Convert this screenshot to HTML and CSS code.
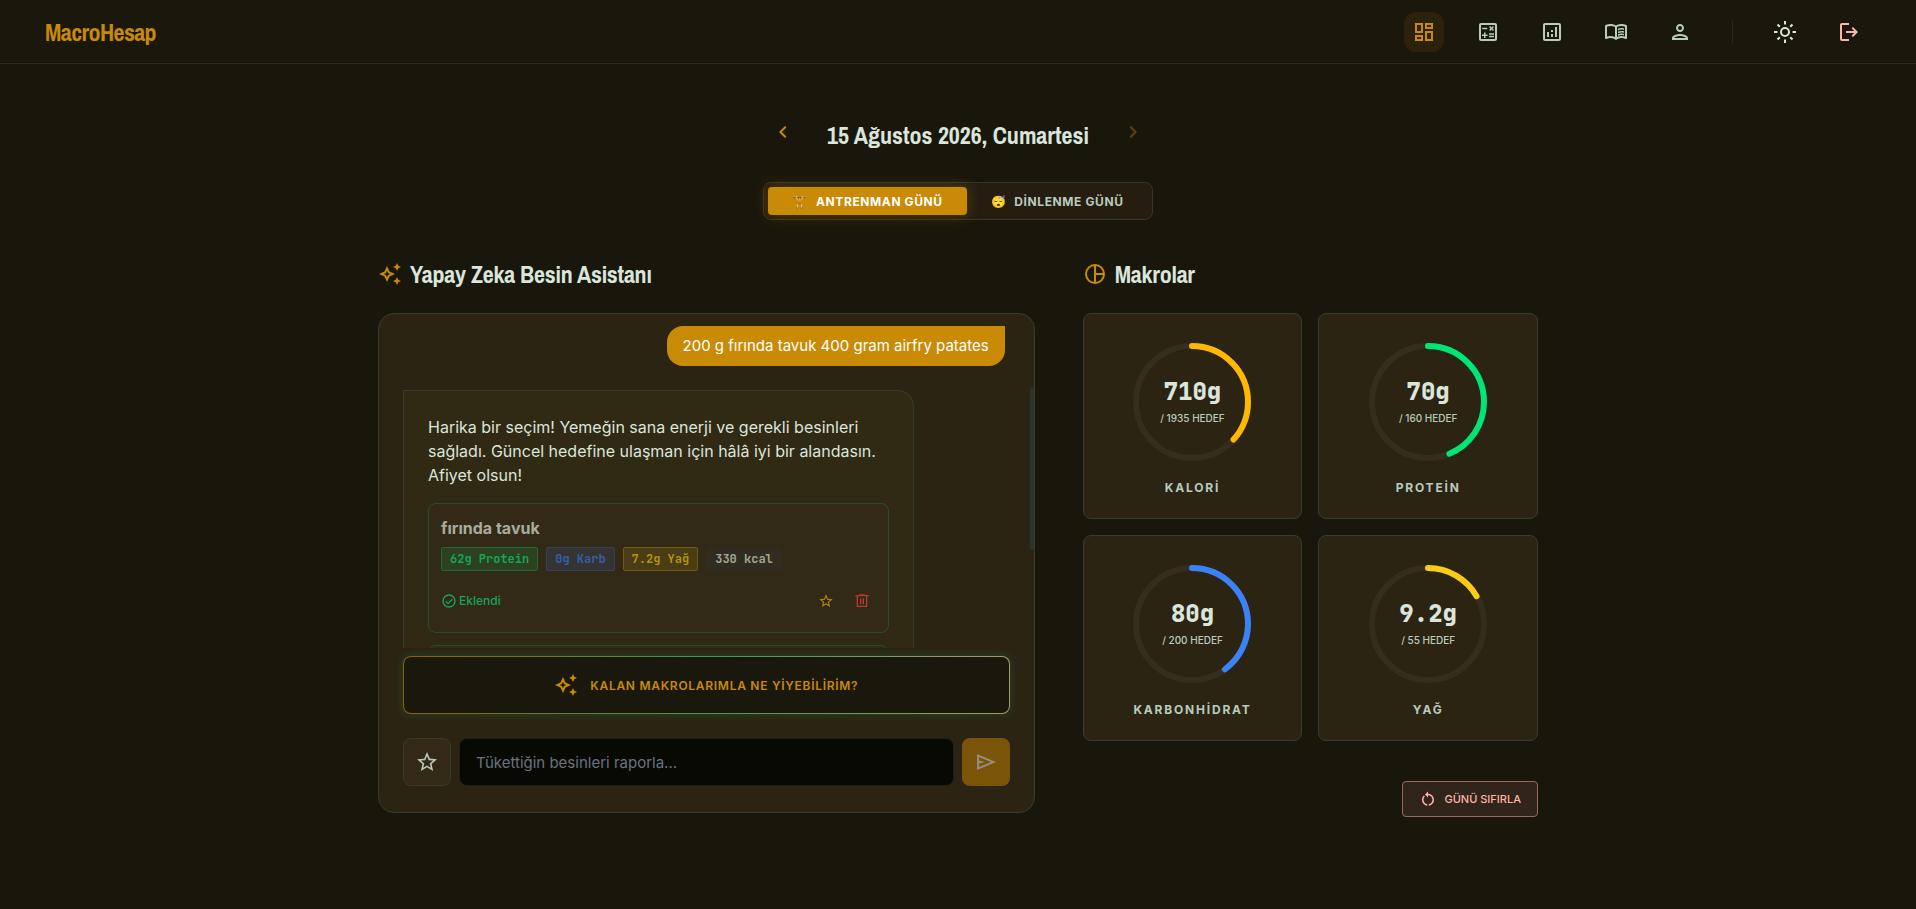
FILE: index.html
```html
<!DOCTYPE html>
<html lang="tr">
<head>
    <meta charset="UTF-8">
    <meta name="viewport" content="width=device-width, initial-scale=1.0">
    <title>MacroHesap</title>
    <link rel="stylesheet" href="styles.css">
</head>
<body>

    <!-- Header -->
    <header class="header">
        <a href="#" class="logo">MacroHesap</a>
        <nav class="nav">
            <a href="#" class="nav-link active" aria-label="Panel">
                <svg class="icon" viewBox="0 0 24 24"><path d="M19 5v2h-4V5h4M9 5v6H5V5h4m10 8v6h-4v-6h4M9 17v2H5v-2h4M21 3h-8v6h8V3zM11 3H3v10h8V3zm10 8h-8v10h8V11zm-10 4H3v6h8v-6z"/></svg>
            </a>
            <a href="#" class="nav-link" aria-label="Hesapla">
                <svg class="icon" viewBox="0 0 24 24"><path d="M19 3H5c-1.1 0-2 .9-2 2v14c0 1.1.9 2 2 2h14c1.1 0 2-.9 2-2V5c0-1.1-.9-2-2-2zm0 16H5V5h14v14z"/><path d="M6.25 7.72h5v1.5h-5zM13 15.75h5v1.5h-5zM13 13.25h5v1.5h-5zM8 18h1.5v-2h2v-1.5h-2v-2H8v2H6V16h2zM14.09 10.95l1.41-1.41 1.41 1.41 1.06-1.06-1.41-1.42 1.41-1.41L16.91 6 15.5 7.41 14.09 6l-1.06 1.06 1.41 1.41-1.41 1.42z"/></svg>
            </a>
            <a href="#" class="nav-link" aria-label="Analiz">
                <svg class="icon" viewBox="0 0 24 24"><path d="M19 3H5c-1.1 0-2 .9-2 2v14c0 1.1.9 2 2 2h14c1.1 0 2-.9 2-2V5c0-1.1-.9-2-2-2zm0 16H5V5h14v14z"/><path d="M7 12h2v5H7zM15 7h2v10h-2zM11 14h2v3h-2zM11 10h2v2h-2z"/></svg>
            </a>
            <a href="#" class="nav-link" aria-label="Tarifler">
                <svg class="icon" viewBox="0 0 24 24"><path fill-rule="evenodd" d="M12 20c-1.600-1.250-3.500-2-5.500-2-1.400 0-2.750.35-4 .95C1.800 19.300 1 18.800 1 18.050V6c0-.4.2-.7.55-.9C3.100 4.400 4.800 4 6.500 4c1.950 0 3.800.5 5.500 1.500C13.700 4.500 15.550 4 17.500 4c1.700 0 3.400.4 4.950 1.100.35.2.55.5.55.9v12.050c0 .75-.8 1.250-1.500.9-1.250-.6-2.600-.95-4-.95-2 0-3.900.75-5.500 2zM11 17.100V7.100C9.650 6.400 8.150 6 6.500 6 5.300 6 4.150 6.200 3 6.650v9.900C4.100 16.200 5.300 16 6.500 16c1.600 0 3.100.35 4.500 1.100zm2 0c1.400-.75 2.900-1.100 4.500-1.100 1.200 0 2.400.2 3.500.55v-9.900C19.850 6.200 18.700 6 17.500 6c-1.650 0-3.150.4-4.500 1.100z"/><path d="M14 8.800c1.800-.8 4-.95 6-.3v1.500c-2-.6-4.200-.5-6 .4zM14 11.600c1.800-.8 4-.95 6-.3v1.500c-2-.6-4.200-.5-6 .4zM14 14.300c1.800-.8 4-.95 6-.3v1.500c-2-.6-4.200-.5-6 .4z"/></svg>
            </a>
            <a href="#" class="nav-link" aria-label="Profil">
                <svg class="icon" viewBox="0 0 24 24"><path d="M12 6a2 2 0 1 1 0 4 2 2 0 0 1 0-4m0 10c2.700 0 5.800 1.290 6 2H6c.23-.72 3.310-2 6-2m0-12C9.790 4 8 5.790 8 8s1.790 4 4 4 4-1.790 4-4-1.790-4-4-4zm0 10c-2.670 0-8 1.340-8 4v2h16v-2c0-2.660-5.330-4-8-4z"/></svg>
            </a>
            <span class="divider"></span>
            <button class="nav-link theme" aria-label="Tema">
                <svg class="icon" viewBox="0 0 24 24"><g fill="none" stroke="currentColor" stroke-width="2"><circle cx="12" cy="12" r="4"/><path d="M12 1v3.500M12 19.500V23M1 12h3.500M19.500 12H23M4.500 4.500l2.300 2.300M17.200 17.200l2.300 2.300M4.500 19.500l2.300-2.300M17.200 6.800l2.300-2.300"/></g></svg>
            </button>
            <button class="nav-link logout" aria-label="Çıkış">
                <svg class="icon" viewBox="0 0 24 24"><path d="M5 5h7V3H5c-1.100 0-2 .9-2 2v14c0 1.100.9 2 2 2h7v-2H5V5z"/><path d="M16 17l-1.400-1.450L17.150 13H9v-2h8.150L14.600 8.450 16 7l5 5z"/></svg>
            </button>
        </nav>
    </header>

    <main class="main">

        <!-- Date picker -->
        <div class="date-row">
            <button class="date-btn" aria-label="Önceki gün">
                <svg class="icon" viewBox="0 0 24 24"><path d="M15.410 7.410 14 6l-6 6 6 6 1.410-1.410L10.830 12z"/></svg>
            </button>
            <h1>15 Ağustos 2026, Cumartesi</h1>
            <button class="date-btn" aria-label="Sonraki gün" disabled>
                <svg class="icon" viewBox="0 0 24 24"><path d="M8.590 16.590 10 18l6-6-6-6-1.410 1.410L13.170 12z"/></svg>
            </button>
        </div>

        <!-- Day type -->
        <div class="day-type">
            <button class="day-btn active"><span class="emoji">🏋️</span>ANTRENMAN GÜNÜ</button>
            <button class="day-btn"><span class="emoji">😴</span>DİNLENME GÜNÜ</button>
        </div>

        <div class="grid">

            <!-- Assistant -->
            <section class="col-chat">
                <h2>
                    <svg class="icon" viewBox="0 0 24 24"><path d="M19 9l1.250-2.750L23 5l-2.750-1.250L19 1l-1.250 2.750L15 5l2.750 1.250L19 9zm0 6l-1.250 2.750L15 19l2.750 1.250L19 23l1.250-2.750L23 19l-2.750-1.250L19 15zm-7.500-5.500L9 4 6.500 9.500 1 12l5.500 2.500L9 20l2.500-5.500L17 12l-5.500-2.500zm-1.510 3.490L9 15.170l-.99-2.180L5.830 12l2.180-.99L9 8.830l.99 2.180 2.180.99-2.180.99z"/></svg>
                    Yapay Zeka Besin Asistanı
                </h2>
                <div class="chat">
                    <div class="messages">
                        <p class="msg-user">200 g fırında tavuk 400 gram airfry patates</p>
                        <div class="msg-ai">
                            <p>Harika bir seçim! Yemeğin sana enerji ve gerekli besinleri sağladı. Güncel hedefine ulaşman için hâlâ iyi bir alandasın. Afiyet olsun!</p>
                            <div class="foods">
                                <div class="food">
                                    <h3>fırında tavuk</h3>
                                    <div class="chips">
                                        <span class="chip protein">62g Protein</span>
                                        <span class="chip carb">0g Karb</span>
                                        <span class="chip fat">7.2g Yağ</span>
                                        <span class="chip kcal">330 kcal</span>
                                    </div>
                                    <div class="food-footer">
                                        <span class="added">
                                            <svg class="icon-sm" viewBox="0 0 24 24"><g fill="none" stroke="currentColor" stroke-width="2"><circle cx="12" cy="12" r="9"/><path d="M7 12.500l3.500 3.500 6.500-6.500"/></g></svg>
                                            Eklendi
                                        </span>
                                        <div class="food-actions">
                                            <button class="fav" aria-label="Favorilere ekle">
                                                <svg class="icon-sm" viewBox="0 0 24 24"><path d="M22 9.240l-7.190-.62L12 2 9.190 8.630 2 9.240l5.460 4.730L5.820 21 12 17.270 18.180 21l-1.630-7.030L22 9.240zM12 15.400l-3.760 2.270 1-4.280-3.320-2.880 4.380-.38L12 6.100l1.710 4.040 4.380.38-3.320 2.880 1 4.280L12 15.400z"/></svg>
                                            </button>
                                            <button class="delete" aria-label="Sil">
                                                <svg class="icon-sm" viewBox="0 0 24 24"><path fill-rule="evenodd" d="M4 21V5H2V3h6V2h8v1h6v2h-2v16zM6 5v14h12V5z"/><path d="M9 8h2v9H9zM13 8h2v9h-2z"/></svg>
                                            </button>
                                        </div>
                                    </div>
                                </div>
                                <div class="food"></div>
                            </div>
                        </div>
                        <span class="scroll-thumb"></span>
                    </div>

                    <button class="suggest">
                        <svg class="icon" viewBox="0 0 24 24"><path d="M19 9l1.250-2.750L23 5l-2.750-1.250L19 1l-1.250 2.750L15 5l2.750 1.250L19 9zm0 6l-1.250 2.750L15 19l2.750 1.250L19 23l1.250-2.750L23 19l-2.750-1.250L19 15zm-7.500-5.500L9 4 6.500 9.500 1 12l5.500 2.500L9 20l2.500-5.500L17 12l-5.500-2.500zm-1.510 3.490L9 15.170l-.99-2.180L5.830 12l2.180-.99L9 8.830l.99 2.180 2.180.99-2.180.99z"/></svg>
                        KALAN MAKROLARIMLA NE YİYEBİLİRİM?
                    </button>

                    <form class="composer">
                        <button type="button" class="square" aria-label="Favoriler">
                            <svg class="icon" viewBox="0 0 24 24"><path d="M22 9.240l-7.190-.62L12 2 9.190 8.630 2 9.240l5.460 4.730L5.820 21 12 17.270 18.180 21l-1.630-7.030L22 9.240zM12 15.400l-3.760 2.270 1-4.280-3.320-2.880 4.380-.38L12 6.100l1.710 4.040 4.380.38-3.320 2.880 1 4.280L12 15.400z"/></svg>
                        </button>
                        <input type="text" placeholder="Tükettiğin besinleri raporla..." aria-label="Besin raporu">
                        <button type="submit" class="square send" aria-label="Gönder" disabled>
                            <svg class="icon" viewBox="0 0 24 24"><path fill-rule="evenodd" d="M3 20V4l19 8zm2-3 11.850-5L5 7v3.500l6 1.500-6 1.500z"/></svg>
                        </button>
                    </form>
                </div>
            </section>

            <!-- Macros -->
            <section class="col-macros">
                <h2>
                    <svg class="icon" viewBox="0 0 24 24"><g fill="none" stroke="currentColor" stroke-width="2"><circle cx="12" cy="12" r="9"/><path d="M12 3v18M12 12h9"/></g></svg>
                    Makrolar
                </h2>
                <div class="macros">
                    <div class="macro">
                        <div class="ring">
                            <svg viewBox="0 0 128 128"><circle class="track" cx="64" cy="64" r="56"/><circle class="bar calories" cx="64" cy="64" r="56" pathLength="100" stroke-dasharray="36.700 100"/></svg>
                            <div class="ring-text"><strong>710g</strong><span>/ 1935 HEDEF</span></div>
                        </div>
                        <span class="macro-label">KALORİ</span>
                    </div>
                    <div class="macro">
                        <div class="ring">
                            <svg viewBox="0 0 128 128"><circle class="track" cx="64" cy="64" r="56"/><circle class="bar green" cx="64" cy="64" r="56" pathLength="100" stroke-dasharray="43.750 100"/></svg>
                            <div class="ring-text"><strong>70g</strong><span>/ 160 HEDEF</span></div>
                        </div>
                        <span class="macro-label">PROTEİN</span>
                    </div>
                    <div class="macro">
                        <div class="ring">
                            <svg viewBox="0 0 128 128"><circle class="track" cx="64" cy="64" r="56"/><circle class="bar blue" cx="64" cy="64" r="56" pathLength="100" stroke-dasharray="40 100"/></svg>
                            <div class="ring-text"><strong>80g</strong><span>/ 200 HEDEF</span></div>
                        </div>
                        <span class="macro-label">KARBONHİDRAT</span>
                    </div>
                    <div class="macro">
                        <div class="ring">
                            <svg viewBox="0 0 128 128"><circle class="track" cx="64" cy="64" r="56"/><circle class="bar yellow" cx="64" cy="64" r="56" pathLength="100" stroke-dasharray="16.700 100"/></svg>
                            <div class="ring-text"><strong>9.2g</strong><span>/ 55 HEDEF</span></div>
                        </div>
                        <span class="macro-label">YAĞ</span>
                    </div>
                </div>
                <button class="reset">
                    <svg viewBox="0 0 24 24"><path d="M12 5V2L8 6l4 4V7c3.310 0 6 2.690 6 6 0 2.970-2.170 5.430-5 5.910v2.020c3.950-.49 7-3.850 7-7.930 0-4.420-3.580-8-8-8zm-6 8c0-1.650.67-3.150 1.760-4.240L6.340 7.340C4.900 8.790 4 10.790 4 13c0 4.080 3.050 7.440 7 7.930v-2.020c-2.830-.48-5-2.940-5-5.910z"/></svg>
                    GÜNÜ SIFIRLA
                </button>
            </section>

        </div>
    </main>

</body>
</html>
```
FILE: styles.css
```css
* { box-sizing: border-box; }
body { margin: 0; min-height: 100vh; background: #19170b; color: #dbe5dc; font-family: Inter, "Liberation Sans", sans-serif; font-size: 16px; line-height: 24px; }
h1, h2, h3, p { margin: 0; }
button { font-family: inherit; border: none; background: none; padding: 0; color: inherit; cursor: pointer; }
svg { display: block; fill: currentColor; flex: none; }
.icon { width: 24px; height: 24px; }
.icon-sm { width: 16px; height: 16px; }

/* Header */
.header { display: flex; align-items: center; justify-content: space-between; height: 64px; padding: 0 47px 0 45px; background: #1a180c; border-bottom: 1px solid #2d3022; }
.logo, h1, h2 { font-family: "Archivo Narrow", "Liberation Sans Narrow", "Arial Narrow", "Liberation Sans", sans-serif; font-size: 24px; line-height: 32px; font-weight: 700; }
.logo { color: #c98a05; text-decoration: none; letter-spacing: -0.025em; }
.nav { display: flex; align-items: center; gap: 24px; }
.nav-link { display: block; padding: 8px; border-radius: 12px; color: #b9cbbc; }
.nav-link.active { background: #2c220b; color: #c98a05; }
.divider { width: 1px; height: 24px; margin: 0 8px; background: #242a1c; }
.theme { color: #dbe5dc; }
.logout { color: #ffb4ab; }

/* Page */
.main { max-width: 1208px; margin: 0 auto; padding: 48px 24px; }
.date-row { display: flex; align-items: flex-start; justify-content: center; gap: 24px; }
.date-row h1 { line-height: 46px; }
.date-btn { padding: 8px; color: #c98a05; }
.date-btn:disabled { opacity: 0.4; }

.day-type { display: flex; width: fit-content; margin: 24px auto 0; padding: 4px; border: 1px solid #383325; border-radius: 8px; background: #241d10; }
.day-btn { display: flex; align-items: center; height: 28px; padding: 0 24px; border-radius: 4px; font-size: 12px; font-weight: 700; letter-spacing: 0.05em; color: #b9cbbc; }
.day-btn.active { background: #c98a05; color: #fff; box-shadow: 0 0 15px rgba(201, 138, 5, 0.3); }
.emoji { margin-right: 8px; }

.grid { display: grid; grid-template-columns: repeat(12, 1fr); gap: 48px; margin-top: 38px; }
.col-chat { grid-column: span 7; }
.col-macros { grid-column: span 5; }
h2 { display: flex; align-items: center; gap: 8px; margin-bottom: 23px; letter-spacing: -0.01em; }
h2 .icon { color: #c98a05; }

/* Chat */
.chat { display: flex; flex-direction: column; height: 500px; padding: 0 24px 26px; border: 1px solid #363d2b; border-radius: 16px; background: #2b2413; }
.messages { position: relative; flex: 1; min-height: 0; overflow: hidden; margin-right: -24px; padding: 12px 29px 0 0; display: flex; flex-direction: column; gap: 24px; }
.msg-user { align-self: flex-end; padding: 8px 16px; border-radius: 16px 0 16px 16px; background: #c98a05; color: #fff; font-size: 15px; }
.msg-ai { flex: none; width: 85%; padding: 24px; border: 1px solid #363d2b; border-radius: 0 16px 16px 16px; background: #302914; }
.foods { display: flex; flex-direction: column; gap: 12px; margin-top: 16px; }
.food { min-height: 130px; padding: 12px; border: 1px solid #26502b; border-radius: 8px; background: #322917; }
.food h3 { font-size: 16px; line-height: 24px; color: #a9ac9d; }
.chips { display: flex; gap: 8px; margin-top: 7px; }
.chip { height: 24px; padding: 0 8px; border: 1px solid; border-radius: 2px; font-family: "JetBrains Mono", "DejaVu Sans Mono", monospace; font-size: 12px; line-height: 22px; font-weight: 700; }
.protein { color: #17a558; background: #2b4120; border-color: #1e6a36; }
.carb { color: #375fa8; background: #333433; border-color: #344258; }
.fat { color: #b8930f; background: #4a3c14; border-color: #73590f; }
.kcal { color: #a3a797; background: #302c1f; border-color: #302c1f; }
.food-footer { display: flex; align-items: center; justify-content: space-between; margin-top: 16px; }
.added { display: flex; align-items: center; gap: 2px; font-size: 12px; font-weight: 500; color: #17a558; }
.food-actions { display: flex; gap: 8px; }
.food-actions button { padding: 6px; }
.fav { color: #b8860e; }
.delete { color: #b83a34; }
.scroll-thumb { position: absolute; right: 0; top: 73px; width: 4px; height: 163px; border-radius: 4px; background: #2b3529; }

.suggest { display: flex; align-items: center; justify-content: center; gap: 12px; flex: none; height: 58px; margin: 8px 0 24px; border: 1px solid transparent; border-radius: 8px; background: linear-gradient(#1a180c, #1a180c) padding-box, linear-gradient(90deg, #8a5f08, #459753 50%, #a59a6c) border-box; box-shadow: 0 0 10px rgba(34, 120, 60, 0.4); color: #c98a05; font-size: 12px; font-weight: 600; letter-spacing: 0.06em; }
.composer { display: flex; gap: 8px; }
.square { display: flex; align-items: center; justify-content: center; flex: none; width: 48px; height: 48px; border: 1px solid #363d2b; border-radius: 8px; background: #322917; color: #b9cbbc; }
.send { border: none; background: #7a5509; color: #958d7c; }
.composer input { flex: 1; min-width: 0; height: 48px; padding: 0 16px; border: 1px solid #1b211a; border-radius: 8px; background: #090904; color: #dbe5dc; font-family: inherit; font-size: 15px; }
.composer input::placeholder { color: #6b7280; }

/* Macros */
.macros { display: grid; grid-template-columns: 1fr 1fr; gap: 16px; }
.macro { display: flex; flex-direction: column; align-items: center; gap: 16px; padding: 24px; border: 1px solid #363d2b; border-radius: 8px; background: #2b2413; }
.ring { position: relative; width: 128px; height: 128px; }
.ring circle { fill: none; stroke-width: 6; transform: rotate(-90deg); transform-origin: center; }
.track { stroke: #352d1e; }
.bar { stroke-linecap: round; }
.calories { stroke: #ffb800; }
.green { stroke: #00e676; }
.blue { stroke: #3b82f6; }
.yellow { stroke: #facc15; }
.ring-text { position: absolute; inset: 0; display: flex; flex-direction: column; align-items: center; justify-content: center; }
.ring-text strong { font-family: "JetBrains Mono", "DejaVu Sans Mono", monospace; font-size: 24px; line-height: 32px; font-weight: 800; }
.ring-text span { font-size: 10px; line-height: 20px; font-weight: 500; color: #b9cbbc; }
.macro-label { font-size: 12px; line-height: 12px; font-weight: 700; letter-spacing: 0.15em; color: #b9cbbc; }
.reset { display: flex; align-items: center; gap: 8px; height: 36px; margin: 40px 0 0 auto; padding: 0 16px; border: 1px solid #946a60; border-radius: 4px; background: #31251b; color: #ffb4ab; font-size: 11px; font-weight: 500; }
.reset svg { width: 18px; height: 18px; }
```
